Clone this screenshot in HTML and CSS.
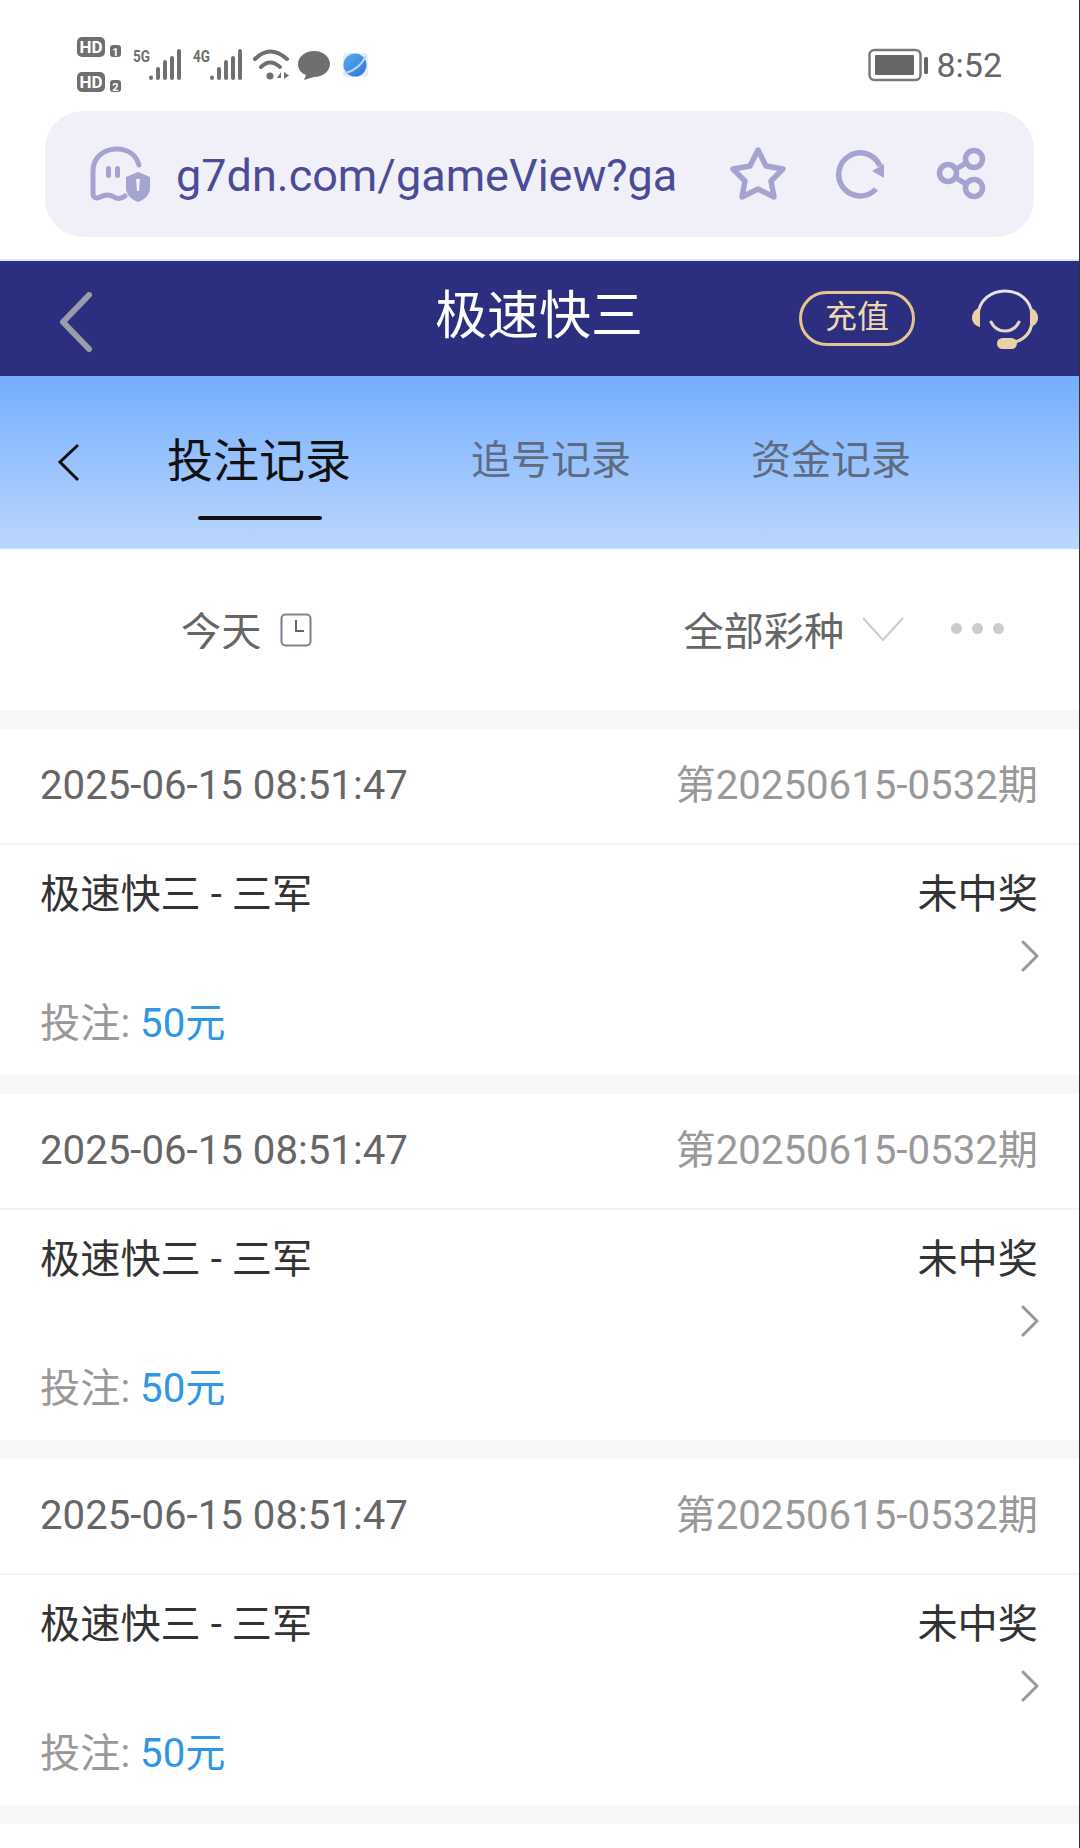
FILE: index.html
```html
<!DOCTYPE html>
<html lang="zh-CN">
<head>
<meta charset="utf-8">
<title>极速快三</title>
<link rel="stylesheet" href="styles.css">
</head>
<body>
<div class="phone">
  <header class="status">
    <svg class="status-icons" viewBox="70 30 310 70" width="310" height="70">
      <defs>
        <linearGradient id="planet" x1="0" y1="0" x2="1" y2="1">
          <stop offset="0" stop-color="#58aeee"/>
          <stop offset="1" stop-color="#2f74d8"/>
        </linearGradient>
      </defs>
      <g fill="#6f6f6f">
        <rect x="77" y="37" width="28" height="20" rx="5"/>
        <rect x="77" y="72" width="28" height="20" rx="5"/>
        <rect x="110" y="45" width="11" height="12" rx="3"/>
        <rect x="110" y="80" width="11" height="12" rx="3"/>
      </g>
      <g fill="#fff" font-family="Roboto, sans-serif" font-weight="700" text-anchor="middle">
        <text x="91" y="53" font-size="17">HD</text>
        <text x="91" y="88" font-size="17">HD</text>
        <text x="115.500" y="55.500" font-size="11">1</text>
        <text x="115.500" y="90.500" font-size="11">2</text>
      </g>
      <g fill="#6f6f6f" font-family="Roboto, sans-serif" font-weight="700" font-size="16">
        <text x="133" y="62" textLength="17" lengthAdjust="spacingAndGlyphs">5G</text>
        <text x="193" y="62" textLength="17" lengthAdjust="spacingAndGlyphs">4G</text>
      </g>
      <g stroke="#6f6f6f" stroke-width="4" stroke-linecap="round">
        <path d="M151 78v-.5M158 78v-9M165 78v-16M172 78v-20M179 78v-27"/>
        <path d="M212 78v-.5M219 78v-9M226 78v-16M233 78v-20M240 78v-27"/>
      </g>
      <g fill="none" stroke="#6f6f6f" stroke-width="4" stroke-linecap="round">
        <path d="M255 59Q270 44 287 59"/>
        <path d="M261 67Q270 58 280 67"/>
      </g>
      <g fill="#6f6f6f">
        <circle cx="270" cy="76" r="3.500"/>
        <path d="M277 78l4-6v6zM284 72l5 3.500-5 3.500z"/>
        <path d="M314 51c9 0 16 6 16 13s-7 13-16 13l-10 3 2-5c-5-2-8-6-8-11 0-7 7-13 16-13z"/>
      </g>
      <rect x="343" y="53" width="25" height="24" rx="4" fill="#e4eefc"/>
      <circle cx="355" cy="65" r="11.500" fill="url(#planet)"/>
      <path d="M345 73Q359 70 366 56" fill="none" stroke="#b9d8f7" stroke-width="2"/>
    </svg>
    <div class="status-right">
      <svg class="battery" viewBox="0 0 62 34" width="62" height="34">
        <rect x="1.500" y="2" width="51" height="30" rx="5" fill="none" stroke="#7a7a7a" stroke-width="2.500"/>
        <rect x="7" y="7" width="39" height="20" rx="1" fill="#666"/>
        <rect x="56" y="9" width="4" height="17" rx="1.500" fill="#666"/>
      </svg>
      <span class="clock-text">8:52</span>
    </div>
  </header>

  <div class="addr-wrap">
    <div class="addr">
      <svg class="ghost" viewBox="90 145 60 57" width="60" height="57">
        <path d="M139 164C136 154 128 148 117 148C103 148 93 157 93 170V192C93 197 96 198 100 196C106 193 110 193 114 196C117 198 121 198 125 195" fill="none" stroke="#a5a3cf" stroke-width="5" stroke-linecap="round"/>
        <rect x="106" y="165" width="5" height="12" rx="2.500" fill="#a5a3cf"/>
        <rect x="115" y="165" width="5" height="12" rx="2.500" fill="#a5a3cf"/>
        <path d="M138 171L150 176V187C150 194 144 199 138 201C132 199 126 194 126 187V176Z" fill="#a5a3cf"/>
        <path d="M136 178H140L139 190H137Z" fill="#f1f0f8"/>
      </svg>
      <span class="url">g7dn.com/gameView?ga</span>
      <svg class="addr-icons" viewBox="725 140 300 66" width="300" height="66">
        <path d="M758 150L766 166L783 169L771 181L774 197L758 189L742 197L745 181L733 169L750 166Z" fill="none" stroke="#a5a3cf" stroke-width="5.500" stroke-linejoin="round"/>
        <path d="M876 189A21.500 21.500 0 1 1 880 166" fill="none" stroke="#a5a3cf" stroke-width="5.500"/>
        <path d="M884 164V178L872 171Z" fill="#a5a3cf"/>
        <g fill="none" stroke="#a5a3cf" stroke-width="5.500">
          <circle cx="974" cy="159" r="8.500"/>
          <circle cx="948" cy="173" r="8.500"/>
          <circle cx="974" cy="188" r="8.500"/>
          <path d="M956 169L966 163M956 178L966 184"/>
        </g>
      </svg>
    </div>
  </div>

  <nav class="topbar">
    <svg class="top-back" viewBox="0 0 40 66" width="40" height="66">
      <path d="M30 3L4 30L30 57" fill="none" stroke="#9a9ca8" stroke-width="6" stroke-linecap="round" stroke-linejoin="round"/>
    </svg>
    <h1 class="top-title">极速快三</h1>
    <span class="recharge">充值</span>
    <svg class="headset" viewBox="973 289 66 60" width="66" height="60">
      <defs>
        <linearGradient id="gold" x1="0" y1="0" x2="0" y2="1">
          <stop offset="0" stop-color="#e9e2ea"/>
          <stop offset="1" stop-color="#e8cfa6"/>
        </linearGradient>
      </defs>
      <path d="M979 315C980 300 992 291 1006 291C1020 291 1032 300 1033 315M1033 322C1032 332 1026 339 1016 342" fill="none" stroke="url(#gold)" stroke-width="3"/>
      <path d="M992 322C998 334 1014 334 1020 322" fill="none" stroke="#e5d3c4" stroke-width="3" stroke-linecap="round"/>
      <path d="M981 308V327C976 326 973 322 973 318C973 313 976 309 981 308Z" fill="#e9d2a8"/>
      <path d="M1031 308V327C1036 326 1039 322 1039 318C1039 313 1036 309 1031 308Z" fill="#e9d2a8"/>
      <rect x="998" y="338" width="20" height="11" rx="5.500" fill="#e9d2a8"/>
    </svg>
  </nav>

  <div class="tabs">
    <svg class="tab-back" viewBox="0 0 24 40" width="24" height="40">
      <path d="M21 2L3 19L21 37" fill="none" stroke="#111" stroke-width="3"/>
    </svg>
    <div class="tab tab-active">投注记录<i class="tab-line"></i></div>
    <div class="tab tab-2">追号记录</div>
    <div class="tab tab-3">资金记录</div>
  </div>

  <div class="filter">
    <div class="filter-label date-label">
      <span class="clip">今天</span>
      <svg class="clock" viewBox="0 0 32 34" width="32" height="34">
        <rect x="1.500" y="1.500" width="29" height="31" rx="4" fill="none" stroke="#7a8095" stroke-width="2"/>
        <path d="M16 7V18H24" fill="none" stroke="#5f6478" stroke-width="2"/>
      </svg>
    </div>
    <div class="filter-label kind-label">
      <span class="clip">全部彩种</span>
      <svg class="down" viewBox="0 0 42 24" width="42" height="24">
        <path d="M1 1L21 23L41 1" fill="none" stroke="#ccc" stroke-width="2"/>
      </svg>
    </div>
    <div class="dots"><i></i><i></i><i></i></div>
  </div>

  <section class="card">
    <div class="card-head"><span class="time">2025-06-15 08:51:47</span><span class="period">第20250615-0532期</span></div>
    <div class="card-body">
      <div class="body-row"><span>极速快三 - 三军</span><span>未中奖</span></div>
      <svg class="more" viewBox="0 0 18 32" width="18" height="32"><path d="M2 2L16 16L2 30" fill="none" stroke="#999" stroke-width="3" stroke-linecap="round" stroke-linejoin="round"/></svg>
      <div class="bet">投注: <span class="amount">50元</span></div>
    </div>
  </section>
  <section class="card">
    <div class="card-head"><span class="time">2025-06-15 08:51:47</span><span class="period">第20250615-0532期</span></div>
    <div class="card-body">
      <div class="body-row"><span>极速快三 - 三军</span><span>未中奖</span></div>
      <svg class="more" viewBox="0 0 18 32" width="18" height="32"><path d="M2 2L16 16L2 30" fill="none" stroke="#999" stroke-width="3" stroke-linecap="round" stroke-linejoin="round"/></svg>
      <div class="bet">投注: <span class="amount">50元</span></div>
    </div>
  </section>
  <section class="card">
    <div class="card-head"><span class="time">2025-06-15 08:51:47</span><span class="period">第20250615-0532期</span></div>
    <div class="card-body">
      <div class="body-row"><span>极速快三 - 三军</span><span>未中奖</span></div>
      <svg class="more" viewBox="0 0 18 32" width="18" height="32"><path d="M2 2L16 16L2 30" fill="none" stroke="#999" stroke-width="3" stroke-linecap="round" stroke-linejoin="round"/></svg>
      <div class="bet">投注: <span class="amount">50元</span></div>
    </div>
  </section>
  <div class="list-end"></div>
</div>
</body>
</html>
```
FILE: styles.css
```css
* { box-sizing: border-box; }
html, body { margin: 0; padding: 0; background: #fff; }
body { font-family: Roboto, "Noto Sans CJK SC", sans-serif; }
.phone { width: 1080px; height: 1848px; overflow: hidden; background: #fff; border-right: 1px solid #333; }

.status { height: 111px; display: flex; justify-content: space-between; }
.status-icons { display: block; margin: 30px 0 0 70px; }
.status-right { display: flex; align-items: center; margin: 0 77px 0 0; height: 130px; }
.battery { margin-right: 6px; }
.clock-text { font-size: 34px; color: #666; }

.addr-wrap { height: 150px; padding: 0 45px 0 45px; border-bottom: 2px solid #e2e6f2; }
.addr { height: 126px; border-radius: 38px; background: #f1f0f8; display: flex; align-items: center; position: relative; padding-left: 45px; }
.ghost { flex: none; }
.url { font-size: 45px; color: #4b4b97; margin-left: 26px; white-space: nowrap; position: relative; top: 1px; }
.addr-icons { position: absolute; left: 680px; top: 29px; }

.topbar { height: 115px; background: #2c2f7f; display: flex; align-items: center; }
.top-back { margin: 12px 0 0 59px; flex: none; }
.top-title { margin: 0 0 4px 336px; font-size: 52px; font-weight: 400; color: #fff; line-height: 1; white-space: nowrap; }
.recharge { margin-left: 156px; width: 116px; height: 55px; border: 3px solid #e8c48d; border-radius: 28px; color: #eed9b0; font-size: 32px; line-height: 1; padding-bottom: 4px; display: flex; align-items: center; justify-content: center; flex: none; }
.headset { margin-left: 57px; flex: none; }

.tabs { height: 173px; background: linear-gradient(#74aefe, #bcd7fe); display: flex; align-items: center; }
.tab-back { margin: 0 0 0 57px; flex: none; }
.tab { white-space: nowrap; font-size: 40px; color: #5f6b80; line-height: 1; margin-bottom: 3px; }
.tab-active { position: relative; margin-left: 86px; font-size: 46px; color: #111; }
.tab-2 { margin-left: 120px; }
.tab-3 { margin-left: 120px; }
.tab-line { position: absolute; left: 31px; top: 78px; width: 124px; height: 4px; border-radius: 2px; background: #111; }

.filter { height: 161px; display: flex; align-items: flex-start; padding-top: 61px; }
.filter-label { display: flex; align-items: flex-start; color: #666; font-size: 40.2px; }
.clip { display: block; height: 39px; overflow: hidden; line-height: 46px; }
.date-label { margin-left: 181px; }
.clock { margin: 3px 0 0 19px; }
.kind-label { margin-left: 371px; }
.down { margin: 7px 0 0 18px; }
.dots { display: flex; gap: 10px; margin: 13px 0 0 47px; }
.dots i { width: 11px; height: 11px; border-radius: 50%; background: #ccc; }

.card { height: 365px; border-top: 19px solid #f7f7f7; background: #fff; }
.card-head { height: 116px; padding: 0 41px 0 40px; border-bottom: 2px solid #f3f3f3; display: flex; align-items: center; justify-content: space-between; font-size: 40.2px; line-height: 1; }
.time { color: #666; }
.period { color: #999; }
.card-body { height: 230px; padding: 30px 41px 0 40px; }
.body-row { display: flex; justify-content: space-between; font-size: 40.2px; line-height: 1; color: #333; }
.more { display: block; margin: 25px -1px 0 auto; }
.bet { margin-top: 32px; font-size: 40.2px; line-height: 1; color: #999; }
.amount { color: #2f96e6; }
.list-end { height: 19px; background: #f7f7f7; }
```
